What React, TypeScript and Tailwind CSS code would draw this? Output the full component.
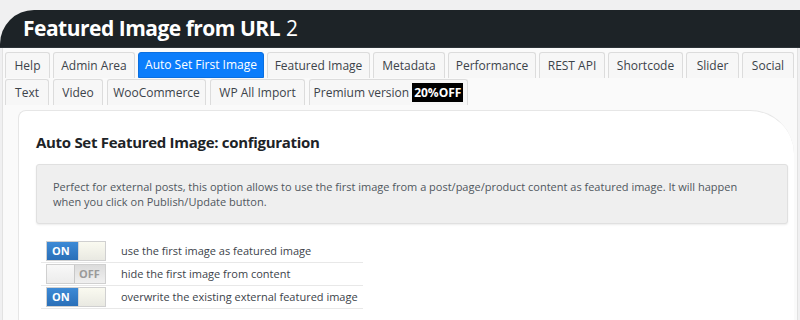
import React from "react";

const rowOne: [string, number][] = [
  ["Help", 45],
  ["Admin Area", 82],
  ["Auto Set First Image", 126],
  ["Featured Image", 103],
  ["Metadata", 72],
  ["Performance", 88],
  ["REST API", 66],
  ["Shortcode", 75],
  ["Slider", 53],
  ["Social", 52],
];
const rowTwo: [string, number][] = [
  ["Text", 44],
  ["Video", 50],
  ["WooCommerce", 99],
  ["WP All Import", 95],
];

function Tab({ label, width, active }: { label: string; width: number; active?: boolean }) {
  return (
    <div
      style={{ width }}
      className={
        active
          ? "h-[26px] shrink-0 whitespace-nowrap flex items-center justify-center rounded-t-[3px] border border-[#0a6fe0] bg-[#0b7dfb] text-white"
          : "h-[26px] shrink-0 whitespace-nowrap flex items-center justify-center rounded-t-[3px] border border-b-0 border-[#dcdcdc] bg-[#f7f7f7] text-[#3c434a]"
      }
    >
      {label}
    </div>
  );
}

function Toggle({ on }: { on: boolean }) {
  return (
    <div className="w-[60px] h-[20px] flex border border-[#d0d0d0] bg-gradient-to-b from-[#f4f4f4] to-[#e4e4e4]">
      {on ? (
        <>
          <div className="w-[31px] h-full bg-gradient-to-b from-[#3d8ad6] to-[#2a6fb8] text-white text-[11px] font-bold flex items-center pl-[5px]">
            ON
          </div>
          <div className="flex-1 border-l border-[#d6d6d6] bg-gradient-to-b from-[#fafaf0] to-[#e9e9e2]" />
        </>
      ) : (
        <>
          <div className="flex-1 bg-gradient-to-b from-[#f8f8f8] to-[#ececec]" />
          <div className="w-[31px] h-full border-l border-[#c8c8c8] bg-gradient-to-b from-[#dcdcdc] to-[#f0f0f0] text-[#9a9a9a] text-[11px] font-bold flex items-center pl-[4px]">
            OFF
          </div>
        </>
      )}
    </div>
  );
}

const options = [
  { on: true, label: "use the first image as featured image" },
  { on: false, label: "hide the first image from content" },
  { on: true, label: "overwrite the existing external featured image" },
];

export default function App() {
  return (
    <div
      className="min-h-screen bg-[#f0f0f1] pt-[10px] overflow-hidden"
      style={{ fontFamily: "'Open Sans', 'Noto Sans', sans-serif" }}
    >
      {/* header */}
      <div className="h-[38px] bg-[#1d2327] rounded-tl-[34px] border-b border-[#2c3338] flex items-center pl-[23px] text-white text-[21px] leading-none">
        <span className="font-bold tracking-[-0.5px]">Featured Image from URL</span>
        <span className="ml-[6px]">2</span>
      </div>

      {/* tabs */}
      <div className="mx-[2px] border-x border-[#e2e2e2] bg-[#fafafa] pl-[2px] pt-[4px] text-[12px]">
        <div className="flex gap-[3px]">
          {rowOne.map(([t, w]) => (
            <Tab key={t} label={t} width={w} active={t === "Auto Set First Image"} />
          ))}
        </div>
        <div className="flex gap-[4px] mt-[1px]">
          {rowTwo.map(([t, w]) => (
            <Tab key={t} label={t} width={w} />
          ))}
          <div className="w-[159px] h-[26px] shrink-0 whitespace-nowrap flex items-center justify-center rounded-t-[3px] border border-b-0 border-[#dcdcdc] bg-[#f7f7f7] text-[#3c434a]">
            Premium version
            <span className="ml-[3px] bg-black text-white font-bold px-[2px] leading-[19px]">20%OFF</span>
          </div>
        </div>

        {/* panel */}
        <div className="ml-[13px] mr-[3px] mt-[5px] bg-white border-l border-t border-[#e6e6e6] rounded-tl-[8px] rounded-tr-[44px] pt-[21px] pl-[17px] pr-[6px] h-[215px]">
          <h2 className="text-[15px] leading-[20px] font-bold tracking-[-0.3px] text-[#1d2327]">
            Auto Set Featured Image: configuration
          </h2>
          <div className="mt-[12px] bg-[#efefef] border border-[#e0e0e0] rounded-[3px] shadow-[0_1px_2px_rgba(0,0,0,0.08)] px-[16px] pt-[14px] pb-[14px] text-[11px] leading-[15px] text-[#50575e] whitespace-nowrap">
            Perfect for external posts, this option allows to use the first image from a post/page/product content as featured image. It will happen
            <br />
            when you click on Publish/Update button.
          </div>
          <div className="mt-[16px] w-[322px] ml-[5px]">
            {options.map((o) => (
              <div key={o.label} className="flex items-center h-[23px] border-b border-[#e8e8e8] pl-[5px]">
                <Toggle on={o.on} />
                <span className="ml-[15px] text-[11px] whitespace-nowrap text-[#3c434a]">{o.label}</span>
              </div>
            ))}
          </div>
        </div>
      </div>
    </div>
  );
}
